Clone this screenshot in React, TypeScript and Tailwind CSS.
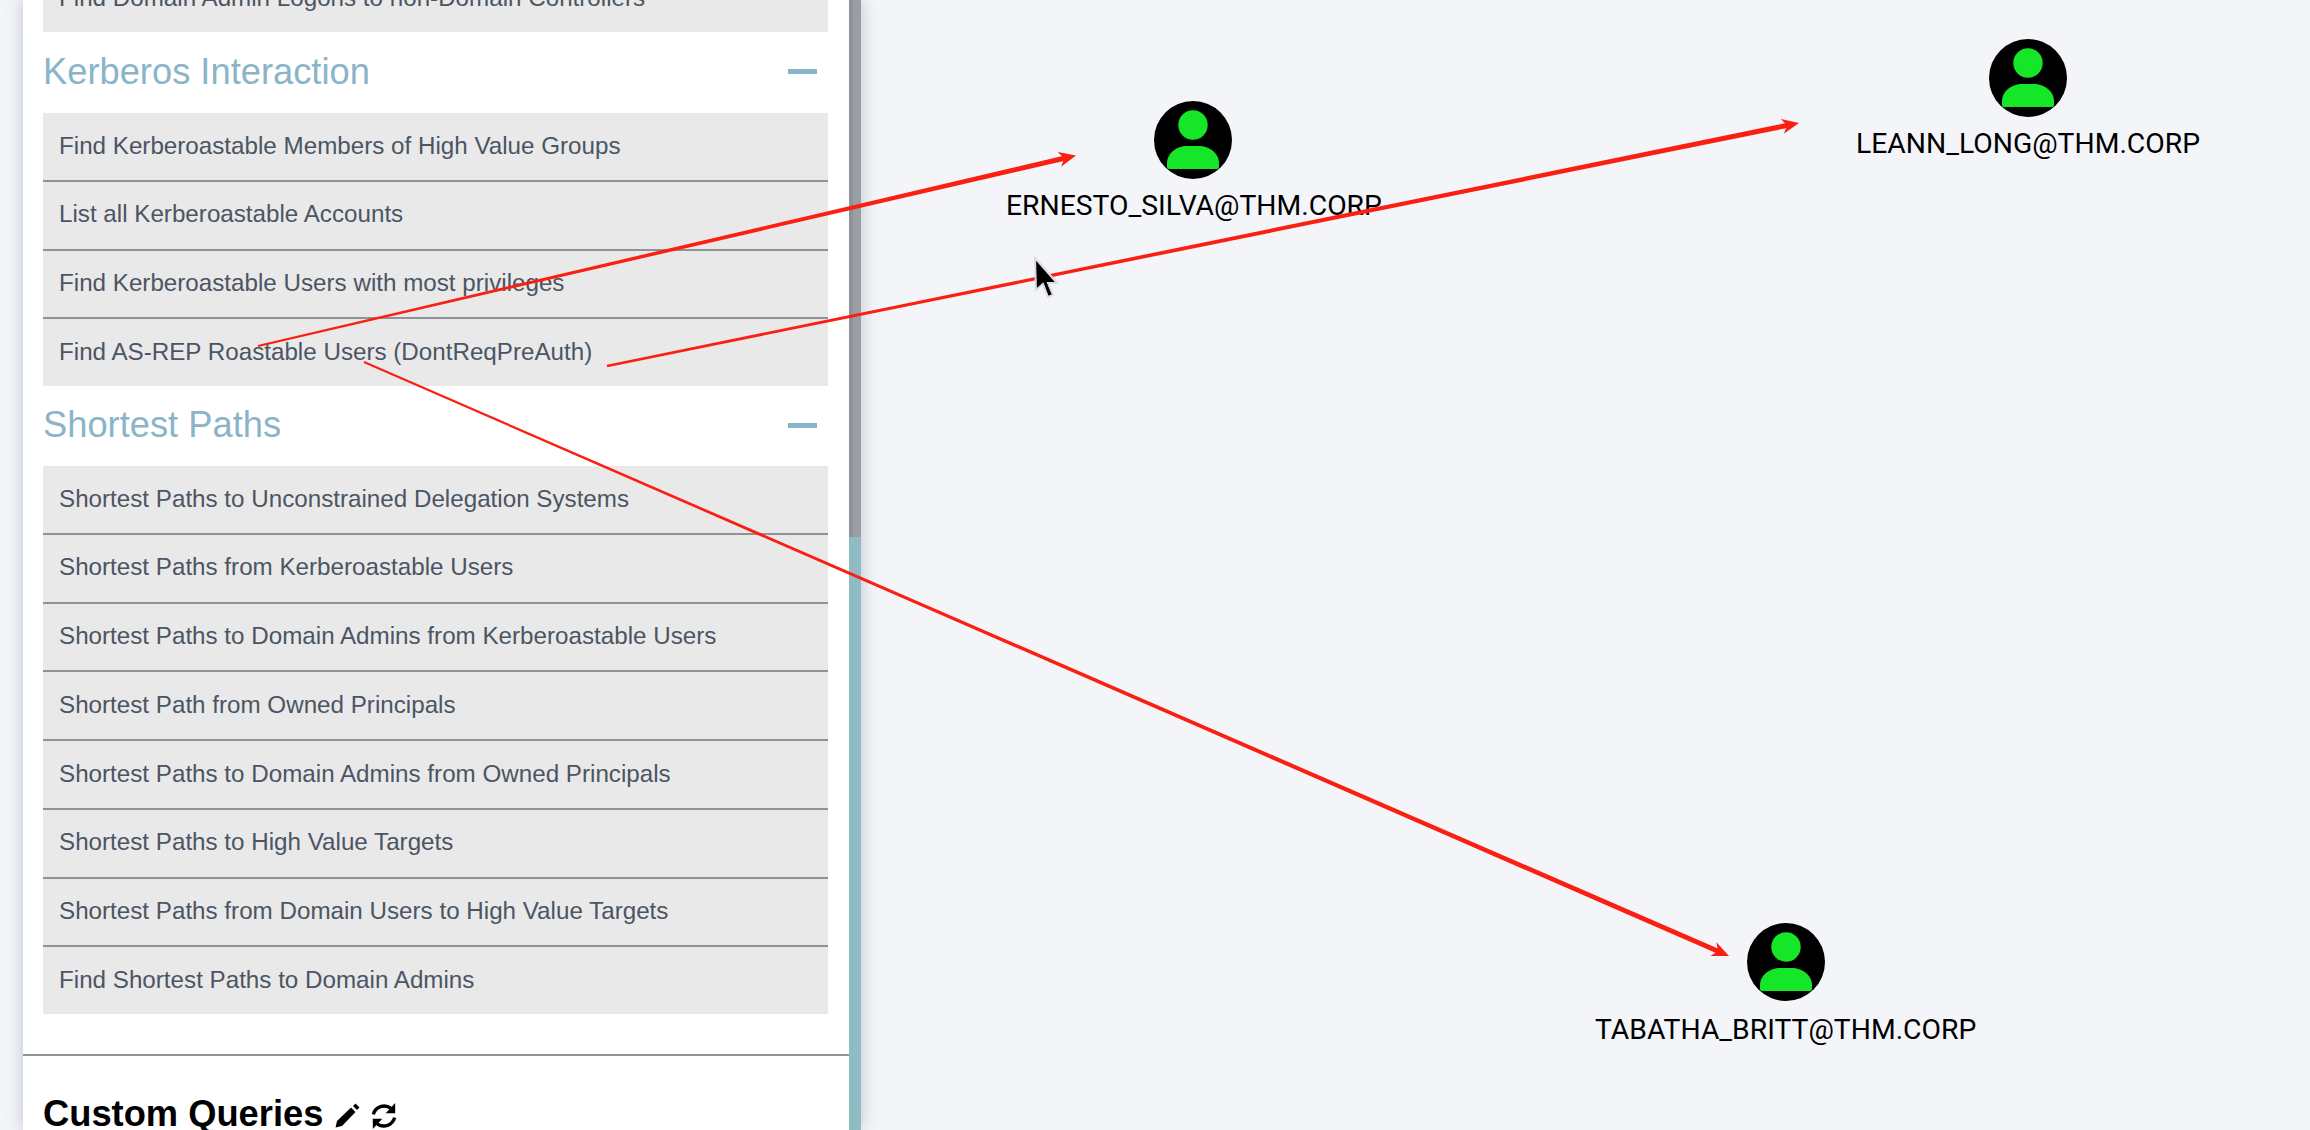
const kerberos = [
  "Find Kerberoastable Members of High Value Groups",
  "List all Kerberoastable Accounts",
  "Find Kerberoastable Users with most privileges",
  "Find AS-REP Roastable Users (DontReqPreAuth)",
];

const paths = [
  "Shortest Paths to Unconstrained Delegation Systems",
  "Shortest Paths from Kerberoastable Users",
  "Shortest Paths to Domain Admins from Kerberoastable Users",
  "Shortest Path from Owned Principals",
  "Shortest Paths to Domain Admins from Owned Principals",
  "Shortest Paths to High Value Targets",
  "Shortest Paths from Domain Users to High Value Targets",
  "Find Shortest Paths to Domain Admins",
];

function Row({ label, last }: { label: string; last?: boolean }) {
  return (
    <div className={`pl-4 pt-[17.5px] text-[24.2px] leading-[30px] text-[#4b5563] ${last ? "h-[66.9px]" : "h-[68.75px] border-b-2 border-[#8f9296]"}`}>
      {label}
    </div>
  );
}

function Group({ title, items, header }: { title: string; items: string[]; header: string }) {
  return (
    <>
      <div className={`flex items-center justify-between pr-[11px] pb-[2px] ${header}`}>
        <span className="text-[36.3px] leading-[44px] text-[#8ab4c8]">{title}</span>
        <span className="h-[5px] w-[29px] bg-[#8ab4c8]"></span>
      </div>
      <div className="bg-[#e9e9e9]">
        {items.map((item, i) => (
          <Row key={item} label={item} last={i === items.length - 1} />
        ))}
      </div>
    </>
  );
}

function UserNode({ cx, cy, name, tx, ty }: { cx: number; cy: number; name: string; tx: number; ty: number }) {
  return (
    <>
      <svg className="absolute" style={{ left: cx - 39, top: cy - 39 }} width="78" height="78" viewBox="0 0 78 78">
        <circle cx="39" cy="39" r="39" fill="#000" />
        <circle cx="39" cy="24" r="14.7" fill="#15e728" />
        <path d="M13 62 C13 52 23 45 33 45 L45 45 C55 45 65 52 65 62 L65 66 Q65 68 63 68 L15 68 Q13 68 13 66 Z" fill="#15e728" />
      </svg>
      <span className="absolute text-[28.3px] leading-[36px] whitespace-nowrap text-black font-['Roboto',sans-serif]" style={{ left: tx, top: ty }}>
        {name}
      </span>
    </>
  );
}

// tapered edge with a vee arrow head, like the graph canvas draws them
function Edge({ from, to, w0, w1 }: { from: number[]; to: number[]; w0: number; w1: number }) {
  const dx = to[0] - from[0];
  const dy = to[1] - from[1];
  const len = Math.hypot(dx, dy);
  const ux = dx / len;
  const uy = dy / len;
  const nx = -uy;
  const ny = ux;
  const at = (back: number, side: number) => `${to[0] - ux * back + nx * side},${to[1] - uy * back + ny * side}`;
  const line = [
    `${from[0] + (nx * w0) / 2},${from[1] + (ny * w0) / 2}`,
    `${from[0] - (nx * w0) / 2},${from[1] - (ny * w0) / 2}`,
    at(10, -w1 / 2),
    at(10, w1 / 2),
  ].join(" ");
  const head = [at(0, 0), at(17, -7.5), at(12, 0), at(17, 7.5)].join(" ");
  return (
    <>
      <polygon points={line} />
      <polygon points={head} />
    </>
  );
}

function PencilIcon() {
  return (
    <svg width="25" height="25" viewBox="0 0 25 25" fill="#000">
      <path d="M0.5 24.5 L2 18 L16 4.5 L20.5 9 L7 23 Z" />
      <path d="M18 3 L20.5 0.5 L24.5 4.5 L22 7 Z" />
    </svg>
  );
}

function RefreshIcon() {
  return (
    <svg width="28" height="28" viewBox="0 0 24 25" fill="#000">
      <path d="M2.5 11 A10 10 0 0 1 18 5.5" fill="none" stroke="#000" strokeWidth="3" />
      <path d="M22 1 L22 10 L13.5 10 Z" />
      <path d="M21.5 14 A10 10 0 0 1 6 19.5" fill="none" stroke="#000" strokeWidth="3" />
      <path d="M2 24 L2 15 L10.5 15 Z" />
    </svg>
  );
}

export default function App() {
  return (
    <div className="relative h-[1130px] w-[2310px] overflow-hidden bg-[#f3f5f9] font-['Liberation_Sans',sans-serif]">
      <aside className="ml-[23px] flex h-full w-[838px] shadow-[0_0_16px_rgba(90,100,120,0.35)]">
        <div className="w-[826px] overflow-hidden bg-white">
          <div className="mt-[-34.85px] pl-[20px] pr-[21px]">
            <div className="bg-[#e9e9e9]">
              <Row label="Find Domain Admin Logons to non-Domain Controllers" last />
            </div>
            <Group title="Kerberos Interaction" items={kerberos} header="h-[81px]" />
            <Group title="Shortest Paths" items={paths} header="h-[79.85px]" />
          </div>
          <div className="mt-[39.85px] border-t-2 border-[#8f9296] px-[20px] pt-[36px]">
            <div className="flex items-center gap-[12px] text-[36.3px] leading-[44px] font-bold text-black">
              <span>Custom Queries</span>
              <span className="mt-[3px] flex items-center gap-[10px]">
                <PencilIcon />
                <RefreshIcon />
              </span>
            </div>
          </div>
        </div>
        <div className="flex w-[12px] flex-col bg-[#8fbcc3]">
          <div className="h-[537px] border-l-4 border-[#90929a] bg-[#9a9da3]"></div>
        </div>
      </aside>

      <UserNode cx={1193} cy={140} name="ERNESTO_SILVA@THM.CORP" tx={1006} ty={188} />
      <UserNode cx={2028} cy={78} name="LEANN_LONG@THM.CORP" tx={1856} ty={126} />
      <UserNode cx={1786} cy={962} name="TABATHA_BRITT@THM.CORP" tx={1595} ty={1012} />

      <svg className="absolute left-0 top-0" width="2310" height="1130" viewBox="0 0 2310 1130">
        <g fill="#fb1f12">
          <Edge from={[258, 346]} to={[1076, 155.5]} w0={2} w1={5} />
          <Edge from={[607, 366]} to={[1799, 123]} w0={2.5} w1={5} />
          <Edge from={[364, 362]} to={[1729, 956]} w0={2} w1={5} />
        </g>
        <path d="M1035 258 L1036 290 L1043 284 L1048 297 L1053 295 L1048 283 L1057 283 Z" fill="#000" stroke="#d9dbe0" strokeWidth="2" />
      </svg>
    </div>
  );
}
